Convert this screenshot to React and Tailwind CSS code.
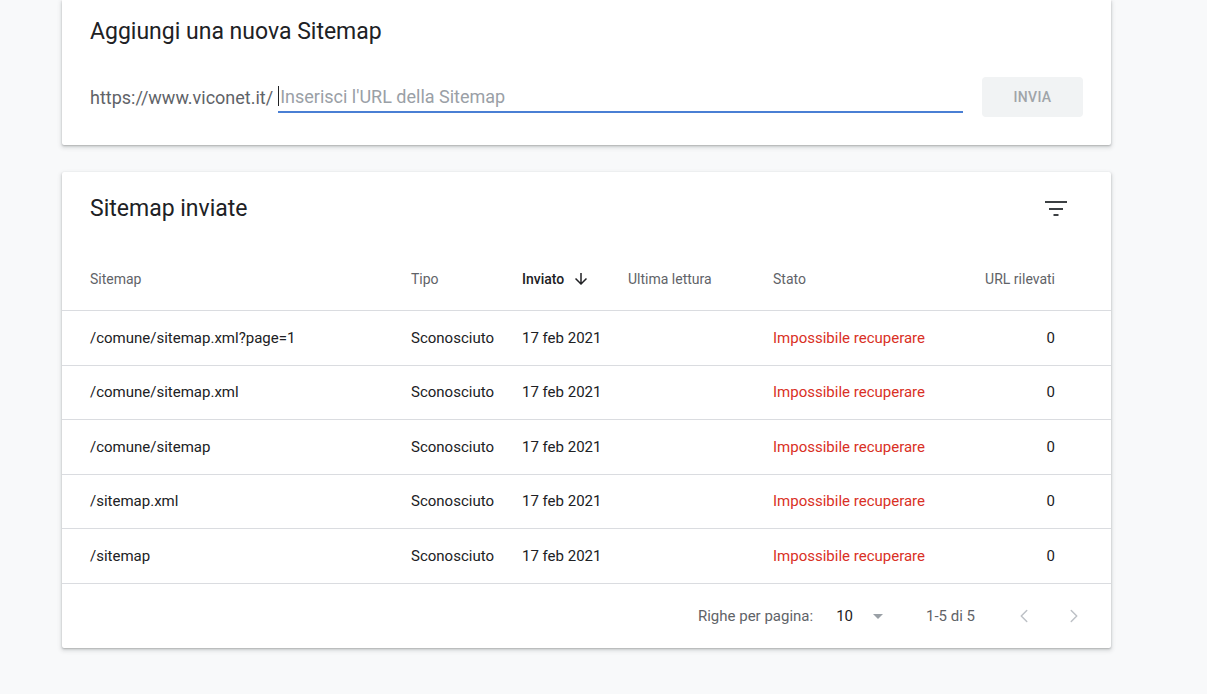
import { ChevronLeft, ChevronRight } from 'lucide-react'

// ── Data ──────────────────────────────────────────────────────────────────────

const ROWS = [
  { path: '/comune/sitemap.xml?page=1' },
  { path: '/comune/sitemap.xml' },
  { path: '/comune/sitemap' },
  { path: '/sitemap.xml' },
  { path: '/sitemap' },
]

const COLS = 'grid grid-cols-[321px_111px_106px_145px_1fr_120px] items-center pl-[28px] pr-[56px]'

// ── Icons ─────────────────────────────────────────────────────────────────────

function FilterIcon() {
  return (
    <svg width="22" height="16" viewBox="0 0 22 16" className="text-[#3c4043]">
      <rect x="0" y="0" width="22" height="2" fill="currentColor" />
      <rect x="4" y="7" width="14" height="2" fill="currentColor" />
      <rect x="8.5" y="13" width="5" height="2" fill="currentColor" />
    </svg>
  )
}

function ArrowDown() {
  return (
    <svg width="18" height="18" viewBox="0 0 24 24" className="text-[#202124]">
      <path fill="currentColor" d="M20 12l-1.41-1.41L13 16.17V4h-2v12.17l-5.58-5.59L4 12l8 8 8-8z" />
    </svg>
  )
}

function DropTriangle() {
  return (
    <svg width="24" height="24" viewBox="0 0 24 24" className="text-[#9aa0a6]">
      <path fill="currentColor" d="M7 10l5 5 5-5z" />
    </svg>
  )
}

// ── Add sitemap card ──────────────────────────────────────────────────────────

function AddSitemapCard() {
  return (
    <div className="bg-white rounded-b-[2px] shadow-[0_1px_2px_rgba(60,64,67,0.3),0_2px_4px_1px_rgba(60,64,67,0.15)] pl-[28px] pr-[28px] pt-[18px] pb-[28px]">
      <h2 className="text-[23px] leading-[28px] text-[#202124]">Aggiungi una nuova Sitemap</h2>
      <div className="flex items-center mt-[31px] h-[40px]">
        <span className="text-[18px] text-[#5f6368] pr-[5px]">https://www.viconet.it/</span>
        <div className="relative flex-1 h-[40px] flex items-center pb-[2px]">
          <span className="w-px h-[20px] bg-[#202124]" />
          <span className="text-[18px] text-[#9aa0a6] pl-[1px]">Inserisci l'URL della Sitemap</span>
          <div className="absolute left-0 right-0 bottom-[4px] h-[2px] bg-[#4a7fd4]" />
        </div>
        <button
          type="button"
          className="ml-[19px] w-[101px] h-[40px] rounded-[4px] bg-[#f1f3f4] text-[14px] font-medium tracking-[0.3px] text-[#a0a4a8]"
        >
          INVIA
        </button>
      </div>
    </div>
  )
}

// ── Submitted sitemaps card ───────────────────────────────────────────────────

function SitemapTable() {
  return (
    <div className="bg-white rounded-[2px] shadow-[0_1px_2px_rgba(60,64,67,0.3),0_2px_4px_1px_rgba(60,64,67,0.15)]">
      {/* Title */}
      <div className="h-[73px] flex items-center justify-between pl-[28px] pr-[44px]">
        <h2 className="text-[23px] leading-[28px] text-[#202124]">Sitemap inviate</h2>
        <FilterIcon />
      </div>

      {/* Header */}
      <div className={`${COLS} h-[66px] pt-[3px] border-b border-[#dadce0] text-[14px] text-[#5f6368]`}>
        <span>Sitemap</span>
        <span>Tipo</span>
        <span className="flex items-center gap-[8px] text-[#202124] font-medium">
          Inviato <ArrowDown />
        </span>
        <span>Ultima lettura</span>
        <span>Stato</span>
        <span className="text-right">URL rilevati</span>
      </div>

      {/* Rows */}
      {ROWS.map((row) => (
        <div
          key={row.path}
          className={`${COLS} h-[54.6px] border-b border-[#dadce0] text-[15px] text-[#202124]`}
        >
          <span>{row.path}</span>
          <span>Sconosciuto</span>
          <span>17 feb 2021</span>
          <span />
          <span className="text-[#d93025]">Impossibile recuperare</span>
          <span className="text-right">0</span>
        </div>
      ))}

      {/* Pagination */}
      <div className="h-[64px] flex items-center justify-end pr-[26px] text-[15px] text-[#5f6368]">
        <span>Righe per pagina:</span>
        <span className="ml-[23px] text-[#202124]">10</span>
        <span className="ml-[13px]"><DropTriangle /></span>
        <span className="ml-[36px]">1-5 di 5</span>
        <ChevronLeft size={22} strokeWidth={1.6} className="ml-[38px] text-[#bdc1c6]" />
        <ChevronRight size={22} strokeWidth={1.6} className="ml-[28px] text-[#bdc1c6]" />
      </div>
    </div>
  )
}

// ── App root ──────────────────────────────────────────────────────────────────

export default function App() {
  return (
    <div className="min-h-screen bg-[#f8f9fa] font-['Roboto',sans-serif]">
      <div className="w-[1049px] ml-[62px] pb-[40px] flex flex-col gap-[27px]">
        <AddSitemapCard />
        <SitemapTable />
      </div>
    </div>
  )
}
